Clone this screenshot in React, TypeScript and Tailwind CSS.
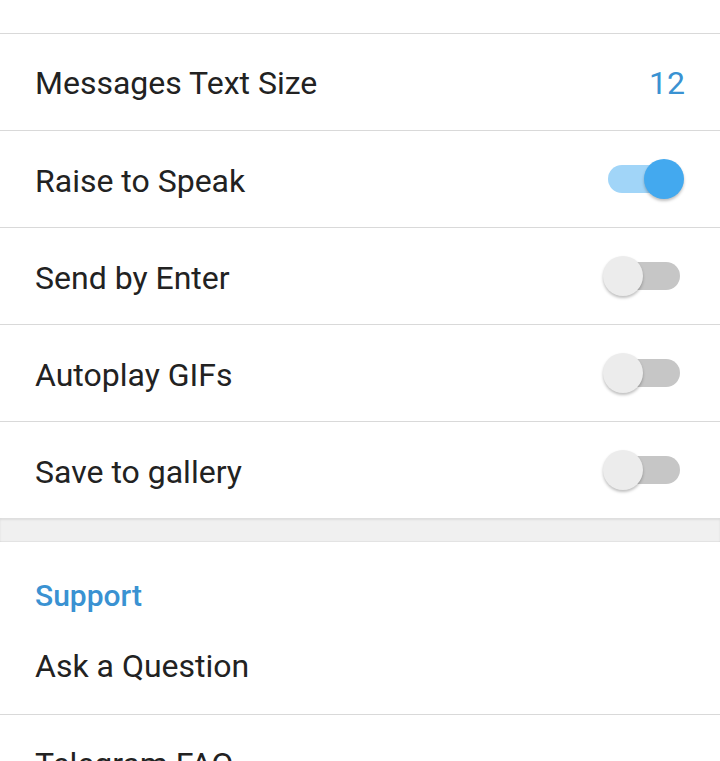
import React from 'react';

function Toggle({ on }: { on: boolean }) {
  return (
    <div className="relative w-[81px] h-[40px] flex items-center">
      <div
        className={
          on
            ? 'ml-[5px] w-[72px] h-[28px] rounded-full bg-[#a1d5f8]'
            : 'ml-[5px] w-[72px] h-[28px] rounded-full bg-[#c6c6c6]'
        }
      />
      <div
        className={
          on
            ? 'absolute right-0 top-0 w-[40px] h-[40px] rounded-full bg-[#43a9ef] shadow-[0_2px_3px_rgba(0,0,0,0.25)]'
            : 'absolute left-0 top-0 w-[40px] h-[40px] rounded-full bg-[#ececec] shadow-[0_2px_3px_rgba(0,0,0,0.25)]'
        }
      />
    </div>
  );
}

const rows = [
  { label: 'Raise to Speak', on: true },
  { label: 'Send by Enter', on: false },
  { label: 'Autoplay GIFs', on: false },
  { label: 'Save to gallery', on: false },
];

export default function App() {
  return (
    <div className="w-[720px] h-[761px] overflow-hidden bg-white font-['Roboto',sans-serif] text-[#222222]">
      <div className="h-[34px] border-b border-[#d9d9d9]" />

      <div className="h-[97px] border-b border-[#d9d9d9] flex items-center justify-between pl-[35px] pr-[35px] pt-[2px]">
        <span className="text-[32px] leading-[40px]">Messages Text Size</span>
        <span className="text-[32px] leading-[40px] text-[#3a92d2]">12</span>
      </div>

      {rows.map((row, i) => (
        <div
          key={row.label}
          className={
            i < rows.length - 1
              ? 'h-[97px] border-b border-[#d9d9d9] flex items-center justify-between pl-[35px] pr-[36px]'
              : 'h-[96px] flex items-center justify-between pl-[35px] pr-[36px]'
          }
        >
          <span className="text-[32px] leading-[40px] pt-[4px]">{row.label}</span>
          <Toggle on={row.on} />
        </div>
      ))}

      <div className="h-[24px] bg-[#f0f0f0] shadow-[inset_0_2px_2px_rgba(0,0,0,0.08),inset_0_-1px_1px_rgba(0,0,0,0.06)]" />

      <div className="h-[78px] pl-[35px] pt-[36px]">
        <span className="text-[30px] font-medium text-[#3a92d2] leading-[36px]">Support</span>
      </div>

      <div className="h-[95px] border-b border-[#d9d9d9] flex items-center pl-[35px] pb-[2px]">
        <span className="text-[32px] leading-[40px]">Ask a Question</span>
      </div>

      <div className="h-[97px] flex items-center pl-[35px]">
        <span className="text-[32px] leading-[40px]">Telegram FAQ</span>
      </div>
    </div>
  );
}
